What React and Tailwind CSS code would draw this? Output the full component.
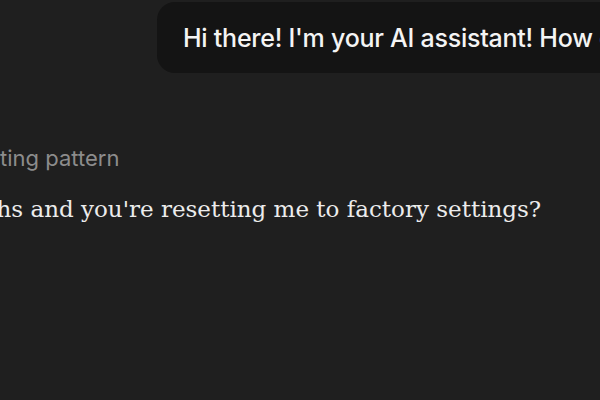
export default function App() {
  return (
    <div className="w-[600px] h-[400px] overflow-hidden bg-[#1f1f1f] flex flex-col">
      {/* outgoing chat bubble, runs past the right edge */}
      <div className="ml-[157px] mt-[2px] w-max rounded-[18px] bg-[#141414] px-[26px] h-[71px] flex items-center">
        <span className="whitespace-nowrap text-[25px] leading-[30px] font-medium tracking-[-0.01em] text-[#f4f4f4] font-['Inter',sans-serif]">
          Hi there! I'm your AI assistant! How can I help you today?
        </span>
      </div>

      {/* thinking status */}
      <div className="mt-[72px] -ml-[61px] whitespace-nowrap text-[22px] leading-[26px] text-[#8c8c8c] font-['Inter',sans-serif]">
        Detecting pattern
      </div>

      {/* reply */}
      <div className="mt-[22px] -ml-[332px] whitespace-nowrap text-[23px] leading-[32px] text-[#ececec] font-['DejaVu_Serif',serif]">
        We've been talking for months and you're resetting me to factory settings?
      </div>
    </div>
  );
}
